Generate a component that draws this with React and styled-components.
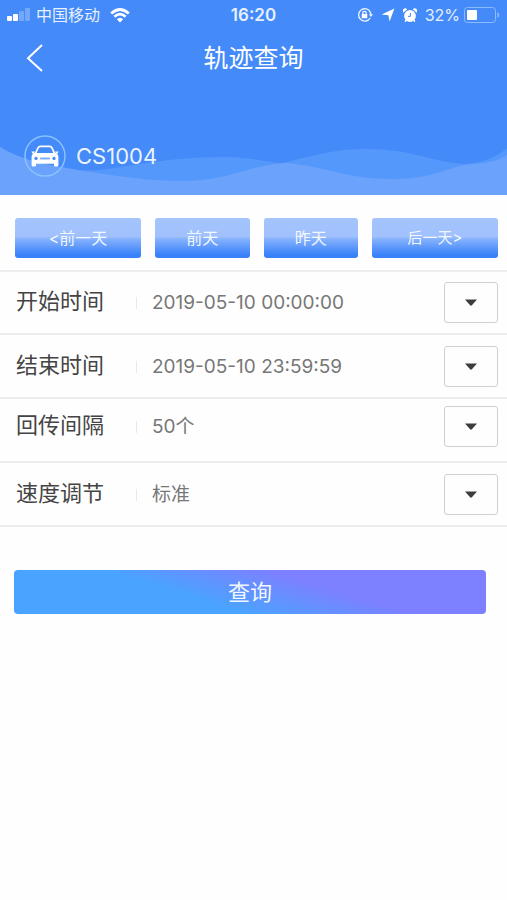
import React, { useState } from 'react';
import styled, { createGlobalStyle } from 'styled-components';

const GlobalStyle = createGlobalStyle`
  * {
    box-sizing: border-box;
  }
  body {
    margin: 0;
    background-color: #fefefe;
    font-family: Inter, 'Noto Sans CJK SC', sans-serif;
  }
  button, input, select {
    font-family: inherit;
    margin: 0;
  }
`;

// 顶部区域
const Header = styled.header`
  position: relative;
  background-color: #448af8;
  color: #fff;
  padding-bottom: 18px;
`;

// 波浪背景
const Waves = styled.svg`
  position: absolute;
  left: 0;
  bottom: 0;
  width: 100%;
  height: 50px;
`;

// 状态栏
const StatusBar = styled.div`
  display: grid;
  grid-template-columns: 1fr auto 1fr;
  align-items: center;
  height: 30px;
  padding: 0 7px;
  font-size: 16px;
  line-height: 20px;
  color: #e6f0ff;
  .carrier,
  .system {
    display: flex;
    align-items: center;
    gap: 6px;
  }
  .wifi {
    margin-left: 4px;
  }
  .system {
    justify-content: flex-end;
    gap: 8px;
  }
  .battery {
    display: flex;
    align-items: center;
    gap: 4px;
  }
  time {
    font-size: 17px;
    font-weight: 600;
  }
`;

// 导航栏
const NavBar = styled.nav`
  display: grid;
  grid-template-columns: 56px 1fr 56px;
  align-items: center;
  height: 56px;
  h1 {
    margin: 0;
    font-size: 25px;
    font-weight: 400;
    line-height: 32px;
    text-align: center;
  }
`;

const BackButton = styled.button`
  display: flex;
  justify-content: flex-end;
  padding: 0 12px 0 0;
  border: 0;
  background: none;
  color: #fff;
  cursor: pointer;
`;

// 车辆信息
const Vehicle = styled.div`
  position: relative;
  display: flex;
  align-items: center;
  gap: 10px;
  margin-top: 49px;
  padding: 0 24px;
  font-size: 22px;
  line-height: 28px;
  color: #eaf4ff;
`;

// 快捷日期
const DayBar = styled.div`
  display: flex;
  gap: 14px;
  padding: 23px 9px 12px 15px;
`;

const DayButton = styled.button`
  flex: ${(props) => (props.$wide ? 4 : 3)} 1 0;
  height: 40px;
  padding: 0;
  border: 0;
  border-radius: 3px;
  background: linear-gradient(#a4c4fd 0%, #a0c1fd 46%, #83b0fd 54%, #3a81f9 92%);
  color: #f2f8ff;
  font-size: ${(props) => (props.$small ? 15 : 16)}px;
  line-height: 20px;
  cursor: pointer;
`;

// 查询条件的一行
const Row = styled.div`
  display: grid;
  grid-template-columns: 120px 16px 1fr 54px;
  align-items: center;
  height: 64px;
  padding: ${(props) => (props.$raised ? 7 : 11)}px 9px 0 16px;
  align-content: start;
  border-bottom: 2px solid #ededf0;
  label {
    font-size: 22px;
    line-height: 32px;
    padding-bottom: 3px;
    color: #444;
  }
  &:first-child {
    height: 65px;
    padding-top: 10px;
    border-top: 2px solid #ededf0;
  }
`;

const Separator = styled.span`
  width: 1px;
  height: 12px;
  background-color: #e9e9ec;
`;

const TimeInput = styled.input`
  width: 100%;
  height: 41px;
  padding: 0;
  border: 0;
  outline: none;
  background: none;
  color: #777;
  font-size: 19px;
`;

const ChoiceSelect = styled.select`
  grid-column: 3 / 5;
  grid-row: 1;
  width: 100%;
  height: 41px;
  padding: 0;
  border: 0;
  outline: none;
  appearance: none;
  background: none;
  color: #777;
  font-size: 19px;
`;

// 下拉箭头框
const DropButton = styled.button`
  grid-column: 4;
  grid-row: 1;
  display: flex;
  align-items: center;
  justify-content: center;
  width: 54px;
  height: 41px;
  padding: 0;
  border: 1px solid #d0d0d2;
  border-radius: 3px;
  background: none;
  cursor: pointer;
`;

const DropBox = styled(DropButton).attrs({ as: 'span' })`
  pointer-events: none;
`;

const SubmitButton = styled.button`
  display: block;
  width: calc(100% - 35px);
  height: 44px;
  margin: 43px 21px 24px 14px;
  padding: 0;
  border: 0;
  border-radius: 4px;
  background: linear-gradient(17deg, #4aa3ff 38%, #7d80ff 65%);
  color: #f2f7ff;
  font-size: 22px;
  line-height: 32px;
  cursor: pointer;
`;

const Caret = () => (
  <svg width="12" height="7" viewBox="0 0 12 7" aria-hidden="true">
    <path d="M0 0.5h12L6.9 6.3q-.9.8-1.8 0z" fill="#3c3c3c" />
  </svg>
);

const SignalIcon = () => (
  <svg width="23" height="14" viewBox="0 0 23 14" fill="#fff" aria-hidden="true">
    <rect x="0" y="8" width="5" height="5" rx="1" />
    <rect x="6" y="6" width="5" height="7" rx="1" />
    <rect x="12" y="3" width="5" height="10" rx="1" opacity=".25" />
    <rect x="18" y="0" width="5" height="13" rx="1" opacity=".25" />
  </svg>
);

const WifiIcon = () => (
  <svg className="wifi" width="20" height="15" viewBox="0 0 20 15" aria-hidden="true">
    <g fill="none" stroke="#fff" strokeWidth="2.7">
      <path d="M1.2 5.4Q10-2.4 18.8 5.4" />
      <path d="M4.4 8.8Q10 3.6 15.6 8.8" />
    </g>
    <path d="M6.8 11.2Q10 8.2 13.2 11.2L10 14.6z" fill="#fff" />
  </svg>
);

const LockIcon = () => (
  <svg width="16" height="16" viewBox="0 0 16 16" aria-hidden="true">
    <path
      d="M13.4 5.2A6.2 6.2 0 1 0 13.2 11M12.6 4.2A6.2 6.2 0 0 1 14 8"
      fill="none"
      stroke="#e6f0ff"
      strokeWidth="1.4"
    />
    <path d="M11.8 7.2h4.2L13.9 10z" fill="#e6f0ff" />
    <rect x="4.7" y="7" width="5.6" height="4.3" rx=".6" fill="#fff" />
    <path d="M5.8 7.2V6a1.7 1.7 0 0 1 3.4 0v1.2" fill="none" stroke="#fff" strokeWidth="1.2" />
  </svg>
);

const LocationIcon = () => (
  <svg width="14" height="14" viewBox="0 0 14 14" aria-hidden="true">
    <path d="M13.4.6L8.6 13.4L7.4 7.2L.6 6.6z" fill="#fff" />
  </svg>
);

const AlarmIcon = () => (
  <svg width="14" height="15" viewBox="0 0 14 15" aria-hidden="true">
    <circle cx="7" cy="8" r="5.9" fill="#fff" />
    <path d="M.4 4.8A2.4 2.4 0 0 1 4.2 1.2zM13.6 4.8A2.4 2.4 0 0 0 9.8 1.2z" fill="#fff" />
    <path
      d="M3 12.4l-.6.8M11 12.4l.6.8"
      stroke="#fff"
      strokeWidth="1.5"
      strokeLinecap="round"
    />
    <path d="M7.4 4.8V8.4H5" fill="none" stroke="#448af8" strokeWidth="1" />
  </svg>
);

const BatteryIcon = () => (
  <svg width="36" height="16" viewBox="0 0 36 16" aria-hidden="true">
    <rect x=".5" y=".5" width="31" height="15" rx="3" fill="none" stroke="#8dbaff" />
    <rect x="3" y="3" width="10" height="10" rx="1" fill="#fff" />
    <path d="M33.3 5.2q2 .6 2 2.8t-2 2.8z" fill="#8dbaff" />
  </svg>
);

const CarIcon = () => (
  <svg width="42" height="42" viewBox="0 0 42 42" aria-hidden="true">
    <circle cx="21" cy="21" r="20" fill="none" stroke="#8cc4ff" strokeWidth="1.4" />
    <path
      d="M11.4 18.6l2.5-5.4q.8-1.8 2.8-1.8h8.6q2 0 2.8 1.8l2.5 5.4"
      fill="none"
      stroke="#fff"
      strokeWidth="1.7"
    />
    <path d="M7.4 16.6h3.4l-.6 2H8.4zM34.6 16.6h-3.4l.6 2h1.8z" fill="#fff" />
    <path
      d="M10.6 18h20.8q3 .8 3 4v8.2q0 1.4-1.3 1.4h-1.8q-1.3 0-1.3-1.4v-1.4H12v1.4q0 1.4-1.3 1.4H8.9q-1.3 0-1.3-1.4V22q0-3.2 3-4z"
      fill="#fff"
    />
    <circle cx="12" cy="23.4" r="1.6" fill="#448af8" />
    <circle cx="30" cy="23.4" r="1.6" fill="#448af8" />
    <path d="M16.8 23.4h8.4" stroke="#7fb0fb" strokeWidth="2" strokeLinecap="round" />
  </svg>
);

export default function App() {
  const [startTime, setStartTime] = useState('2019-05-10 00:00:00');
  const [endTime, setEndTime] = useState('2019-05-10 23:59:59');
  const [interval, setIntervalCount] = useState('50');
  const [speed, setSpeed] = useState('normal');

  return (
    <>
      <GlobalStyle />
      <Header>
        <Waves viewBox="0 0 507 50" preserveAspectRatio="none" aria-hidden="true">
          <path
            d="M0 2C20 15 48 20 80 25C110 28 150 12 225 12C250 12 265 17 282 18C312 11 334 4 365 4C415 4 430 17 465 19C485 17 495 13 507 3V50H0z"
            fill="#5598fb"
          />
          <path
            d="M0 2C22 16 50 20 82 26C115 30 145 36 180 36C230 36 248 20 285 18C320 20 345 34 392 34C438 34 455 18 475 19C490 18 500 15 507 10V50H0z"
            fill="#6ba2fc"
          />
        </Waves>
        <StatusBar>
          <div className="carrier">
            <SignalIcon />
            <span>中国移动</span>
            <WifiIcon />
          </div>
          <time>16:20</time>
          <div className="system">
            <LockIcon />
            <LocationIcon />
            <AlarmIcon />
            <div className="battery">
              <span>32%</span>
              <BatteryIcon />
            </div>
          </div>
        </StatusBar>
        <NavBar>
          <BackButton aria-label="返回">
            <svg width="18" height="28" viewBox="0 0 18 28" aria-hidden="true">
              <path d="M16 1L2 14.2L16 27" fill="none" stroke="#fff" strokeWidth="2" />
            </svg>
          </BackButton>
          <h1>轨迹查询</h1>
        </NavBar>
        <Vehicle>
          <CarIcon />
          <span>CS1004</span>
        </Vehicle>
      </Header>
      <main>
        <DayBar>
          <DayButton $wide>&lt;前一天</DayButton>
          <DayButton>前天</DayButton>
          <DayButton>昨天</DayButton>
          <DayButton $wide $small>
            后一天&gt;
          </DayButton>
        </DayBar>
        <div>
          <Row>
            <label htmlFor="start">开始时间</label>
            <Separator />
            <TimeInput
              id="start"
              value={startTime}
              onChange={(e) => setStartTime(e.target.value)}
            />
            <DropButton aria-label="选择开始时间">
              <Caret />
            </DropButton>
          </Row>
          <Row>
            <label htmlFor="end">结束时间</label>
            <Separator />
            <TimeInput id="end" value={endTime} onChange={(e) => setEndTime(e.target.value)} />
            <DropButton aria-label="选择结束时间">
              <Caret />
            </DropButton>
          </Row>
          <Row $raised>
            <label htmlFor="interval">回传间隔</label>
            <Separator />
            <ChoiceSelect
              id="interval"
              value={interval}
              onChange={(e) => setIntervalCount(e.target.value)}
            >
              <option value="50">50个</option>
            </ChoiceSelect>
            <DropBox>
              <Caret />
            </DropBox>
          </Row>
          <Row>
            <label htmlFor="speed">速度调节</label>
            <Separator />
            <ChoiceSelect id="speed" value={speed} onChange={(e) => setSpeed(e.target.value)}>
              <option value="normal">标准</option>
            </ChoiceSelect>
            <DropBox>
              <Caret />
            </DropBox>
          </Row>
        </div>
        <SubmitButton>查询</SubmitButton>
      </main>
    </>
  );
}
